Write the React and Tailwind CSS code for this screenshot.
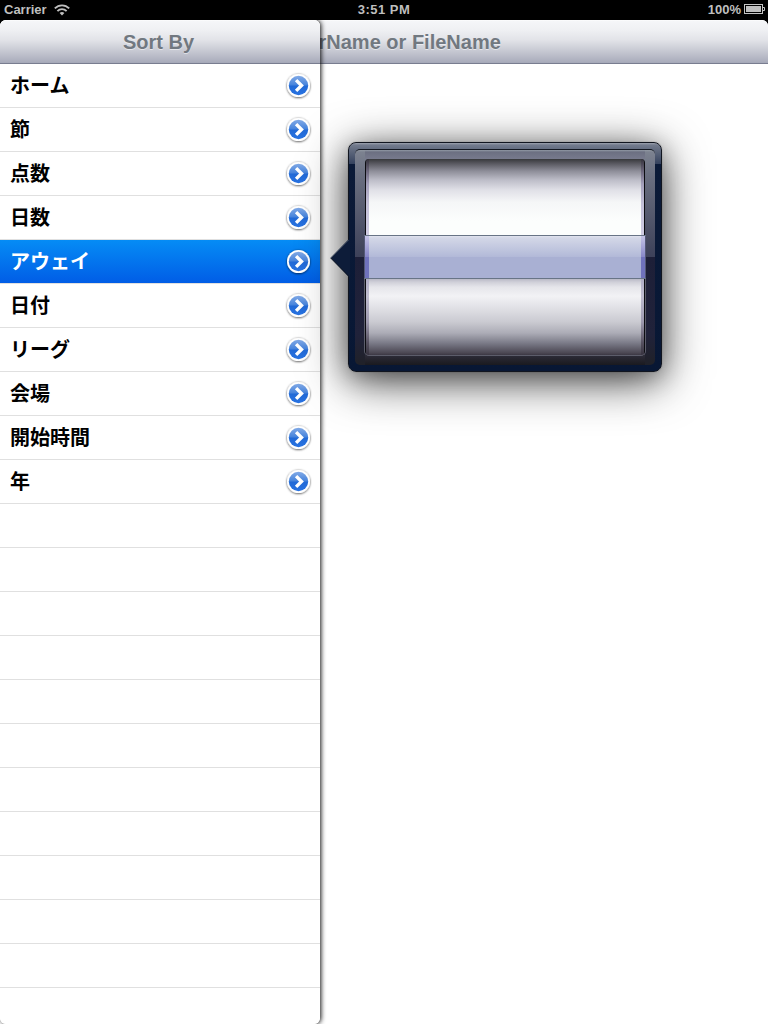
import React from "react";

const fields = ["ホーム", "節", "点数", "日数", "アウェイ", "日付", "リーグ", "会場", "開始時間", "年"];
const selected = "アウェイ";
const blanks = Array.from({ length: 12 }, (_, i) => i);

const barGradient =
  "bg-[linear-gradient(to_bottom,#ffffff_0,#f5f6f8_1px,#eff0f3_10px,#e2e3e8_20px,#c9cbd4_30px,#aaadbc_42px,#a3a7b7_43px,#797d90_43px)]";

function StatusBar() {
  return (
    <header className="grid h-5 shrink-0 grid-cols-3 items-center bg-black text-[13px] leading-5 font-bold text-[#bfbfbf]">
      <div className="flex items-center gap-[7px] pl-1">
        <span className="w-[43px]">Carrier</span>
        <svg width="16" height="12" viewBox="0 0 16 12" fill="none" stroke="#bfbfbf" strokeWidth="1.9">
          <path d="M0.8 4.4C4.9 0.3 11.1 0.3 15.2 4.4" />
          <path d="M3.4 7.1C6 4.5 10 4.5 12.6 7.1" />
          <path d="M8 11.4L5.6 9C7 7.7 9 7.7 10.4 9Z" fill="#bfbfbf" stroke="none" />
        </svg>
      </div>
      <div className="text-center tracking-[0.5px]">3:51 PM</div>
      <div className="flex items-center justify-end gap-[3px] pr-[3px]">
        <span>100%</span>
        <svg width="21" height="10" viewBox="0 0 21 10" fill="none" className="-mt-[2px]">
          <rect x="0.5" y="0.5" width="18" height="9" stroke="#c4c4c4" />
          <rect x="2" y="2" width="15" height="6" fill="#bfbfbf" />
          <path d="M19 3.5H20.5V6.5H19" stroke="#c4c4c4" />
        </svg>
      </div>
    </header>
  );
}

function Disclosure() {
  return (
    <svg width="29" height="30" viewBox="0 0 29 30" className="shrink-0">
      <defs>
        <linearGradient id="disc" x1="0" y1="0" x2="0" y2="1">
          <stop offset="0" stopColor="#82aae6" />
          <stop offset="0.48" stopColor="#4583dc" />
          <stop offset="0.52" stopColor="#2169d6" />
          <stop offset="1" stopColor="#2873e2" />
        </linearGradient>
        <filter id="discShadow" x="-30%" y="-30%" width="160%" height="160%">
          <feDropShadow dx="0" dy="0.6" stdDeviation="1.1" floodColor="#000" floodOpacity="0.75" />
        </filter>
      </defs>
      <circle cx="14.5" cy="14.5" r="11.5" fill="#fff" filter="url(#discShadow)" />
      <circle cx="14.5" cy="14.5" r="9.7" fill="url(#disc)" />
      <path d="M12.1 9.1L17.5 14.5L12.1 19.9" fill="none" stroke="#fff" strokeWidth="3.4" />
    </svg>
  );
}

function Row({ label }) {
  const active = label === selected;
  return (
    <li
      className={
        "flex h-11 items-center justify-between border-b border-[#e0e0e0] pr-[7px] pl-[10px] text-[20px] leading-[41px] font-bold " +
        (active ? "bg-[linear-gradient(to_bottom,#058cf5,#015de6)] text-white" : "text-black")
      }
    >
      <span className="pt-[2px]">{label}</span>
      <Disclosure />
    </li>
  );
}

function Sidebar() {
  return (
    <aside className="flex w-80 shrink-0 flex-col overflow-hidden rounded-[6px] bg-white">
      <div
        className={
          "flex h-11 shrink-0 items-center justify-center text-[20px] font-bold text-[#717880] [text-shadow:0_1px_0_#ffffff80] " +
          barGradient
        }
      >
        <h2 className="pr-[3px]">Sort By</h2>
      </div>
      <ul className="min-h-0 flex-1 overflow-hidden">
        {fields.map((f) => (
          <Row key={f} label={f} />
        ))}
        {blanks.map((i) => (
          <li key={i} className="h-11 border-b border-[#e0e0e0]" />
        ))}
      </ul>
    </aside>
  );
}

function Picker() {
  return (
    <div className="relative h-[197px] w-[280px]">
      <div className="flex h-full justify-between overflow-hidden rounded-[4px] border-x border-[#0c0d12] bg-[linear-gradient(to_bottom,#37393c_0,#55555c_4px,#8d8d98_12px,#bdbdc8_21px,#e0e0e7_31px,#f5f6f7_43px,#fcfefd_62px,#fcfefd_110px,#b9b9c6_120px,#cfcfd8_123px,#e5e5ea_128px,#f2f2f5_137px,#e2e2e7_148px,#cacad1_163px,#acacb6_174px,#7b7b88_184px,#4b4753_194px,#3c3844_196px,#656572_196px)]">
        <div className="w-[3px] bg-[linear-gradient(to_bottom,#34323c_0,#6c677c_12px,#a39fba_25px,#c3c0d8_45px,#cfcce2_76px,#b0adc6_120px,#c0bdd0_137px,#9d99ae_163px,#55505f_184px,#34303c_100%)]" />
        <div className="w-[3px] bg-[linear-gradient(to_bottom,#34323c_0,#6c677c_12px,#a39fba_25px,#c3c0d8_45px,#cfcce2_76px,#b0adc6_120px,#c0bdd0_137px,#9d99ae_163px,#55505f_184px,#34303c_100%)]" />
      </div>
      <div className="absolute -inset-x-px top-[76px] flex h-11 justify-between border-y border-[#687486] bg-[linear-gradient(to_bottom,#e1e4ef_0,#d3d7e7_2px,#b2b9d8_21px,#a9b0d3_21px,#a9b0d3_100%)]">
        <div className="w-[5px] border-l border-[#555a78] bg-[linear-gradient(to_bottom,#c4c3e6_0,#8888c9_21px,#7072bc_21px)]" />
        <div className="w-[5px] border-r border-[#555a78] bg-[linear-gradient(to_bottom,#c4c3e6_0,#8888c9_21px,#7072bc_21px)]" />
      </div>
      <div className="absolute -inset-x-px top-[120px] bottom-0 rounded-b-[5px] border border-t-0 border-[#5c5d6b]" />
    </div>
  );
}

function Popover() {
  return (
    <div className="absolute top-[142px] left-[348px] z-20">
      <div className="h-[230px] w-[314px] rounded-[8px] border border-[#11151f] bg-[linear-gradient(to_bottom,#9da3af_0,#737b8d_2px,#5b657a_9px,#35425e_21px,#0b1a38_21px,#081734_100%)] px-[6px] pt-[6px] pb-[6px] shadow-[0_9px_46px_rgba(0,0,0,0.72),0_5px_22px_rgba(0,0,0,0.25),0_0_1px_rgba(0,0,0,0.5)]">
        <div className="flex h-[216px] justify-center rounded-[5px] border-t border-[#141821] bg-[linear-gradient(to_bottom,#9299a3_0,#7c8290_2px,#6a6f80_25px,#3d4159_107px,#1d1f38_107px,#20223a_185px,#202128_100%)]">
          <div className="w-[280px] bg-[linear-gradient(to_bottom,#929aa5_0,#6c7082_2px,#777a8d_9px,transparent_9px,transparent_205px,#2d2c39_205px,#1a1a1f_100%)] pt-[9px]">
            <Picker />
          </div>
        </div>
      </div>
      <svg width="20" height="38" viewBox="0 0 20 38" className="absolute top-[97px] left-[-18px]">
        <path d="M20 0.5H18.5L0.7 19L18.5 37.5H20Z" fill="#0d1c39" />
        <path d="M18.5 1L0.7 19" fill="none" stroke="#4a5465" strokeWidth="1" />
        <path d="M0.7 19L18.5 37" fill="none" stroke="#0c1422" strokeWidth="1" />
      </svg>
    </div>
  );
}

export default function App() {
  return (
    <div className="relative flex h-[1024px] w-[768px] flex-col overflow-hidden bg-black font-['Liberation_Sans','Noto_Sans_CJK_JP',sans-serif]">
      <StatusBar />
      <div className="flex min-h-0 flex-1 overflow-hidden rounded-t-[6px] bg-white">
        <div className="relative z-10 flex w-80 shrink-0 rounded-[6px] shadow-[1px_0_5px_rgba(0,0,0,0.95)]">
          <Sidebar />
        </div>
        <main className="-ml-80 flex w-[768px] shrink-0 flex-col bg-white">
          <div
            className={
              "flex h-11 shrink-0 items-center justify-center text-[20px] font-bold text-[#717880] [text-shadow:0_1px_0_#ffffff80] " +
              barGradient
            }
          >
            <h1 className="pr-[2px]">FolderName or FileName</h1>
          </div>
        </main>
      </div>
      <Popover />
    </div>
  );
}
